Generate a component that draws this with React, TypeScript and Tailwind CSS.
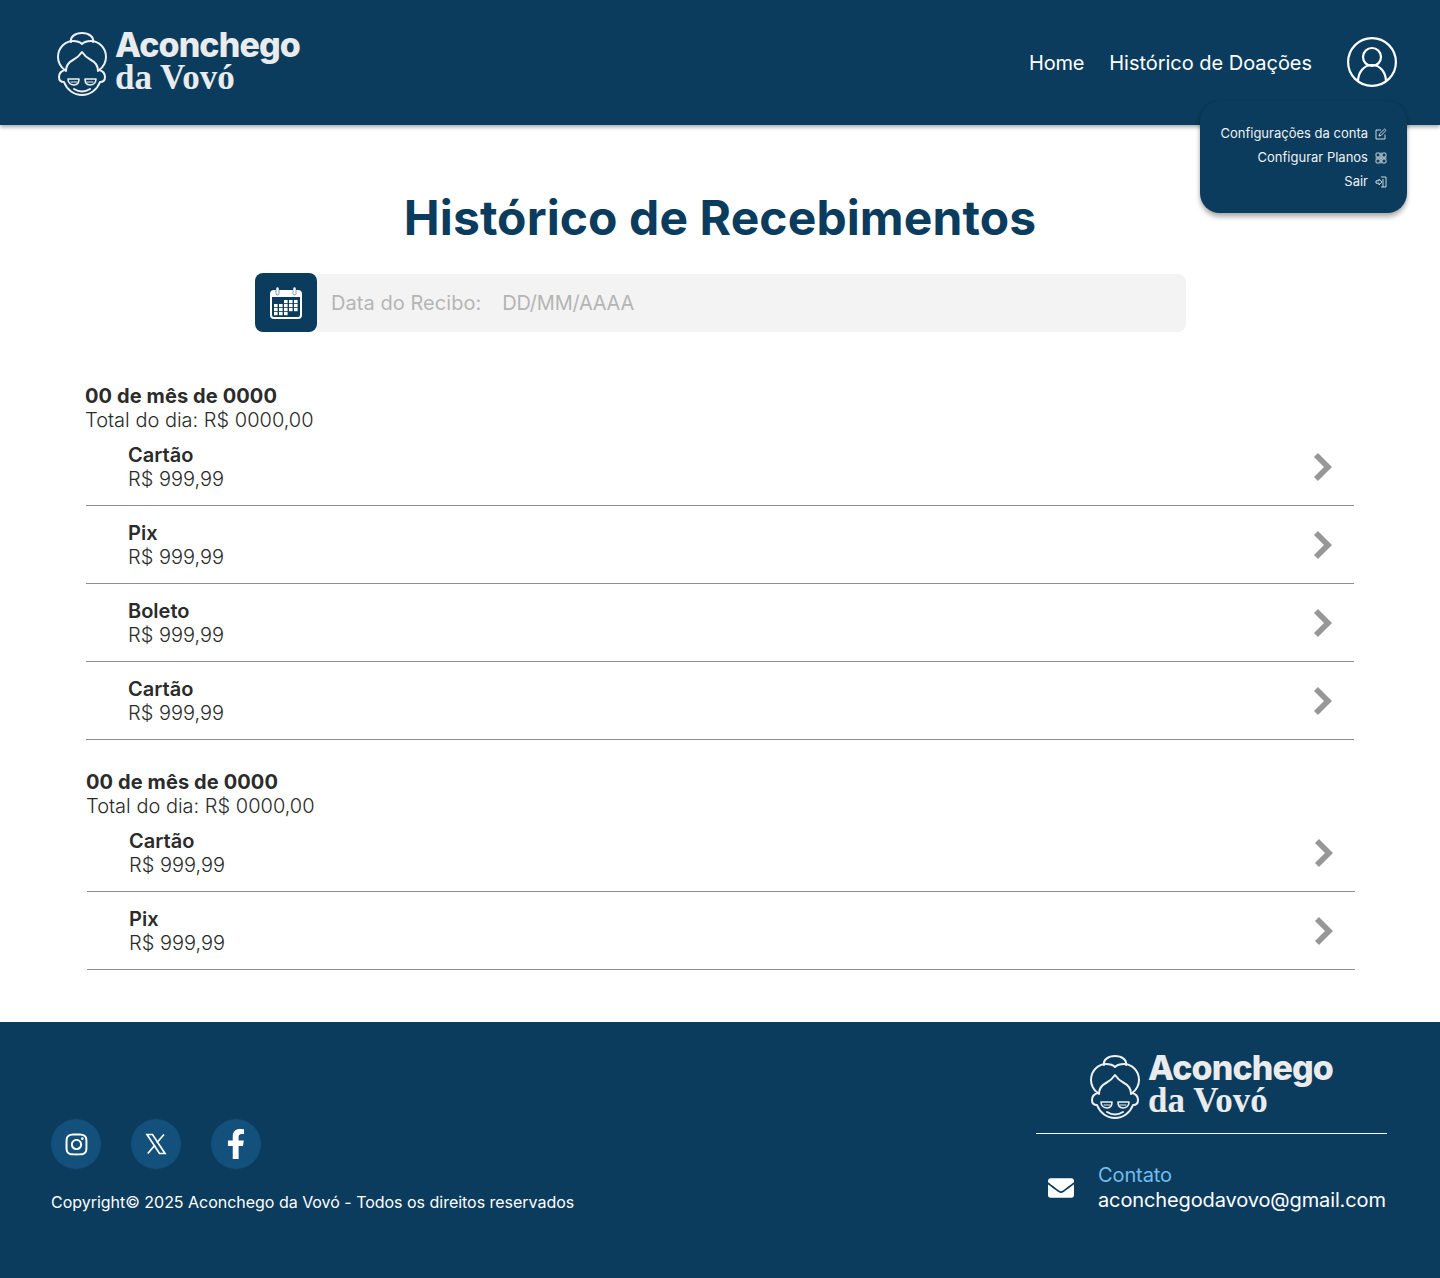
import { ChevronRight } from 'lucide-react';
import { FaFacebookF, FaEnvelope } from 'react-icons/fa';
import { FaInstagram } from 'react-icons/fa6';

// ── Logo ───────────────────────────────────────────────────────────────────────

function GrandmaIcon() {
  return (
    <svg width="50" height="64" viewBox="0 0 50 64" fill="none" stroke="#eef0f1" strokeWidth="2" strokeLinecap="round" strokeLinejoin="round">
      {/* bun */}
      <path d="M14 10C13 5 18 1 25 1s12 4 11 9" />
      {/* hair */}
      <path d="M8 38C3 35 1 29 1 25 1 15 9 9 16 9c4 0 7 1 9 3 2-2 5-3 9-3 7 0 15 6 15 16 0 4-2 10-7 13" />
      <path d="M9 39c0-6 3-9 7-11 4-2 7-5 9-8 2 3 5 6 9 8 4 2 7 5 7 11" />
      {/* face */}
      <path d="M8 38c-4 1-6 4-6 7 0 3 2 5 5 5 3 8 10 13 18 13s15-5 18-13c3 0 5-2 5-5 0-3-2-6-6-7" />
      {/* glasses */}
      <path d="M11 47h11c0 4-2 6-5 6s-6-2-6-6z" strokeWidth="1.6" />
      <path d="M28 47h11c0 4-3 6-6 6s-5-2-5-6z" strokeWidth="1.6" />
      <path d="M14 50h6M30 50h6" strokeWidth="1.2" />
      {/* smile */}
      <path d="M17 57c5 3 11 3 16 0" />
    </svg>
  );
}

function Logo() {
  return (
    <div className="flex items-center gap-[8px]">
      <GrandmaIcon />
      <div className="flex flex-col pb-[6px] text-[#e9ebec]">
        <span className="font-['Inter'] text-[34px] leading-[33px] font-extrabold tracking-[-0.9px]">Aconchego</span>
        <span className="font-['Liberation_Serif',serif] text-[35px] leading-[33px] font-bold">da Vovó</span>
      </div>
    </div>
  );
}

// ── Icons ──────────────────────────────────────────────────────────────────────

function EditIcon() {
  return (
    <svg width="12" height="12" viewBox="0 0 12 12" fill="none" stroke="#dfe6ea" strokeWidth="0.9">
      <path d="M10 6.5V11H1V2h5" />
      <path d="M4 8l.6-2.2L9.6 1 11 2.4 6.2 7.4z" />
    </svg>
  );
}

function PlansIcon() {
  return (
    <svg width="12" height="12" viewBox="0 0 12 12" fill="none" stroke="#dfe6ea" strokeWidth="0.9">
      <rect x="1" y="1" width="4" height="4" rx="1" />
      <rect x="7" y="1" width="4" height="4" rx="1" />
      <rect x="1" y="7" width="4" height="4" rx="1" />
      <rect x="7" y="7" width="4" height="4" rx="1" />
      <path d="M0.5 6h11M6 .5v11" />
    </svg>
  );
}

function ExitIcon() {
  return (
    <svg width="12" height="12" viewBox="0 0 12 12" fill="none" stroke="#dfe6ea" strokeWidth="0.9">
      <path d="M6 1h5v10H6" />
      <path d="M8 3v8" />
      <path d="M1 4.8h3V3l3 3-3 3V7.2H1z" />
    </svg>
  );
}

function UserIcon() {
  return (
    <svg width="50" height="50" viewBox="0 0 50 50" fill="none" stroke="#fff" strokeWidth="2.2">
      <circle cx="25" cy="25" r="23.9" />
      <circle cx="25" cy="20" r="9" />
      <path d="M11 45c0-10 6-17 14-17s14 7 14 17" />
    </svg>
  );
}

function XLogo() {
  return (
    <svg width="24" height="24" viewBox="0 0 24 24" fill="none" stroke="#fff" strokeWidth="1.7">
      <path d="M3 2.5h5.5L21 21.5h-5.5z" />
      <path d="M20 2.5l-7.2 8.2M10.8 13.2L3.8 21.5" />
    </svg>
  );
}

function CalendarIcon() {
  const cells = [
    [14, 13], [19, 13], [24, 13],
    [4, 17], [9, 17], [14, 17], [19, 17], [24, 17],
    [4, 21], [9, 21], [14, 21], [19, 21], [24, 21],
    [4, 25], [9, 25], [14, 25],
  ];
  return (
    <svg width="32" height="32" viewBox="0 0 32 32">
      <rect x="1" y="4" width="30" height="27" rx="3" fill="none" stroke="#fff" strokeWidth="2" />
      <rect x="1" y="4" width="30" height="6" fill="#fff" />
      <rect x="6" y="0" width="3" height="8" rx="1.5" fill="#fff" stroke="#0b3c5d" strokeWidth="0.5" />
      <rect x="23" y="0" width="3" height="8" rx="1.5" fill="#fff" stroke="#0b3c5d" strokeWidth="0.5" />
      {cells.map(([x, y]) => (
        <rect key={`${x}-${y}`} x={x} y={y} width="3.6" height="3.2" fill="#fff" />
      ))}
    </svg>
  );
}

// ── Sections ───────────────────────────────────────────────────────────────────

function MenuItem({ label, icon }: { label: string; icon: React.ReactNode }) {
  return (
    <div className="flex h-[24px] items-center justify-end gap-[7px] text-[13px] text-[#eef2f4]">
      <span>{label}</span>
      {icon}
    </div>
  );
}

function Row({ name }: { name: string }) {
  return (
    <div className="ml-[1px] flex h-[78px] items-center justify-between border-b border-[#8f8f8f] pt-[1px] pr-[11px] pl-[42px]">
      <div className="text-[20px] leading-[24px] text-[#2b2b2b]">
        <div className="font-semibold">{name}</div>
        <div className="font-light">R$ 999,99</div>
      </div>
      <ChevronRight size={40} strokeWidth={3.4} color="#979797" strokeLinecap="square" strokeLinejoin="miter" />
    </div>
  );
}

function DayGroup({ rows, className }: { rows: string[]; className: string }) {
  return (
    <section className={className}>
      <div className="text-[20px] leading-[24px] text-[#2b2b2b]">
        <div className="font-bold tracking-[0.1px]">00 de mês de 0000</div>
        <div className="font-light">Total do dia: R$ 0000,00</div>
      </div>
      <div className="-mt-[4px]">
        {rows.map((name, i) => (
          <Row key={i} name={name} />
        ))}
      </div>
    </section>
  );
}

function SocialCircle({ children }: { children: React.ReactNode }) {
  return (
    <div className="flex h-[50px] w-[50px] items-center justify-center rounded-full bg-[#13507c] text-white">
      {children}
    </div>
  );
}

export default function App() {
  return (
    <div className="relative flex min-h-[1278px] flex-col bg-white font-['Inter',sans-serif]">
      {/* Header */}
      <header className="z-10 flex h-[125px] items-center justify-between bg-[#0b3c5d] pr-[43px] pl-[57px] shadow-[0_2px_4px_rgba(0,0,0,0.35)]">
        <div className="mt-[2px]">
          <Logo />
        </div>
        <nav className="flex items-center text-[20px] text-white">
          <span className="tracking-[-0.2px]">Home</span>
          <span className="ml-[25px] tracking-[-0.03px]">Histórico de Doações</span>
          <span className="mb-[2px] ml-[35px]">
            <UserIcon />
          </span>
        </nav>
      </header>

      {/* Account menu */}
      <div className="absolute top-[101px] left-[1200px] z-20 h-[112px] w-[207px] rounded-[20px] bg-[#0b3c5d] pt-[21px] pr-[20px] shadow-[0_4px_5px_rgba(0,0,0,0.3),0_0_3px_rgba(0,0,0,0.12)]">
        <MenuItem label="Configurações da conta" icon={<EditIcon />} />
        <MenuItem label="Configurar Planos" icon={<PlansIcon />} />
        <MenuItem label="Sair" icon={<ExitIcon />} />
      </div>

      {/* Content */}
      <main className="flex-1">
        <h1 className="mt-[62px] text-center text-[48px] leading-[62px] font-bold tracking-[0.1px] text-[#0b3c5d]">
          Histórico de Recebimentos
        </h1>

        <div className="mt-[24px] ml-[255px] flex h-[59px] w-[931px] items-center">
          <div className="flex h-[59px] w-[62px] shrink-0 items-center justify-center rounded-[8px] bg-[#0b3c5d]">
            <CalendarIcon />
          </div>
          <div className="flex h-[58px] flex-1 items-center rounded-r-[8px] bg-[#f3f3f3] pl-[14px] text-[20px] text-[#b5b5b5]">
            <span className="tracking-[0.05px]">Data do Recibo:</span>
            <span className="ml-[21px] tracking-[-0.25px]">DD/MM/AAAA</span>
          </div>
        </div>

        <DayGroup className="mt-[52px] mr-[86px] ml-[85px]" rows={['Cartão', 'Pix', 'Boleto', 'Cartão']} />
        <DayGroup className="mt-[30px] mr-[85px] ml-[86px]" rows={['Cartão', 'Pix']} />
      </main>

      {/* Footer */}
      <footer className="flex h-[256px] justify-between bg-[#0b3c5d] pr-[53px] pl-[51px] text-white">
        <div className="pt-[97px]">
          <div className="flex gap-[30px]">
            <SocialCircle>
              <FaInstagram size={25} />
            </SocialCircle>
            <SocialCircle>
              <XLogo />
            </SocialCircle>
            <SocialCircle>
              <FaFacebookF size={30} />
            </SocialCircle>
          </div>
          <p className="mt-[23px] text-[16px] leading-[20px] tracking-[-0.02px]">
            Copyright© 2025 Aconchego da Vovó - Todos os direitos reservados
          </p>
        </div>

        <div className="w-[351px] pt-[29px]">
          <div className="flex h-[83px] justify-center border-b border-white">
            <div className="h-[72px]">
              <Logo />
            </div>
          </div>
          <div className="mt-[29px] flex items-center">
            <FaEnvelope size={26} className="ml-[12px]" />
            <div className="ml-[24px] text-[20px] leading-[25px]">
              <div className="tracking-[-0.1px] text-[#72bcee]">Contato</div>
              <div className="tracking-[-0.12px]">aconchegodavovo@gmail.com</div>
            </div>
          </div>
        </div>
      </footer>
    </div>
  );
}
